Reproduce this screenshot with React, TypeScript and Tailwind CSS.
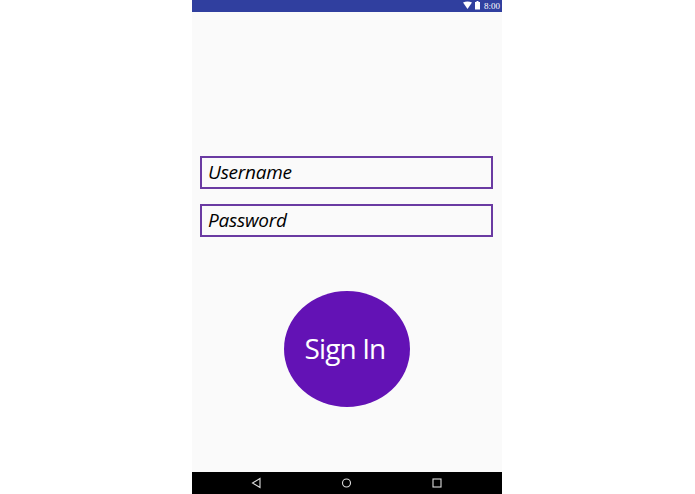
export default function App() {
  return (
    <div className="w-[695px] h-[494px] bg-white flex justify-center overflow-hidden" style={{ fontFamily: '"Open Sans", sans-serif' }}>
      <div className="w-[310px] h-full ml-[-1px] flex flex-col bg-[#fafafa]">
        <div className="h-3 bg-[#303f9f] flex items-center justify-end pr-[2px] gap-[3px] text-white">
          <svg width="18" height="10" viewBox="0 0 18 10">
            <path d="M0 1.5 Q4.5 -0.5 9 1.5 L4.5 8 Z" fill="#fff" />
            <rect x="12" y="1" width="5" height="7.5" fill="#fff" />
            <rect x="13.5" y="0" width="2" height="1" fill="#fff" />
          </svg>
          <span className="text-[9px] leading-none" style={{ fontFamily: '"Liberation Serif", serif' }}>8:00</span>
        </div>
        <div className="flex-1 flex flex-col px-2 pt-[144px]">
          <div className="w-[293px] h-[33px] border-2 border-[#6a3aa2] flex items-center pl-[6px] text-[19px] tracking-[-0.25px] italic text-black">Username</div>
          <div className="w-[293px] h-[33px] mt-[15px] border-2 border-[#6a3aa2] flex items-center pl-[6px] text-[19px] tracking-[-0.25px] italic text-black">Password</div>
          <div className="mt-[54px] ml-[84px] w-[126px] h-[116px] rounded-[50%] bg-[#6312b5] flex items-center justify-center pr-[4px] pb-[2px] text-white text-[28px] tracking-[-0.9px]">Sign In</div>
        </div>
        <div className="h-[22px] bg-black flex items-center pl-[59px]">
          <svg width="11" height="12" viewBox="0 0 11 12" fill="none" stroke="#ddd" strokeWidth="1.1"><path d="M9 1.5 L1.5 6 L9 10.5 Z" /></svg>
          <svg width="11" height="12" viewBox="0 0 11 12" fill="none" stroke="#ddd" strokeWidth="1.1" className="ml-[79px]"><circle cx="5.5" cy="6" r="4" /></svg>
          <svg width="11" height="12" viewBox="0 0 11 12" fill="none" stroke="#ddd" strokeWidth="1.1" className="ml-[79px]"><rect x="2" y="2" width="8" height="8" /></svg>
        </div>
      </div>
    </div>
  );
}
